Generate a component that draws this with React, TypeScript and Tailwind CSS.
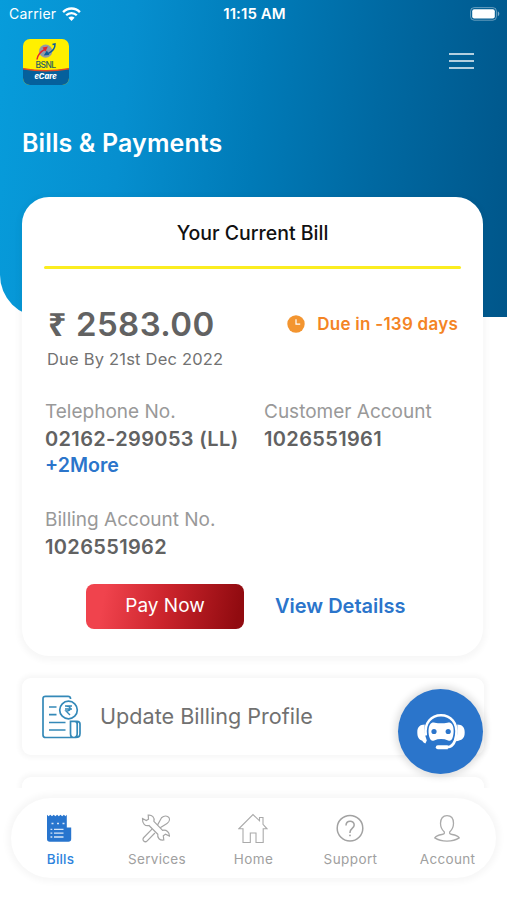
import React from "react";

type IconProps = { className?: string };

const WifiIcon = () => (
  <svg className="h-[15px] w-[19px]" viewBox="0 0 19 15" fill="none" stroke="#fff">
    <path d="M1.1 5.1C5.8.3 13.2.3 17.9 5.1" strokeWidth="2.4" />
    <path d="M4.2 8.3c3-3 7.6-3 10.6 0" strokeWidth="2.3" />
    <path d="M9.5 14 6.4 10.8c1.7-1.6 4.5-1.6 6.2 0Z" fill="#fff" stroke="none" />
  </svg>
);

const BatteryIcon = () => (
  <svg className="h-[14px] w-[30px]" viewBox="0 0 30 14">
    <rect x=".6" y=".6" width="25.8" height="12.6" rx="3.6" fill="none" stroke="#fff" strokeOpacity=".4" />
    <rect x="2.2" y="2.3" width="22.6" height="9.2" rx="2" fill="#fff" />
    <path d="M27.8 4.6c2 .6 2 4 0 4.6Z" fill="#fff" fillOpacity=".5" />
  </svg>
);

const Logo = () => (
  <div className="relative flex h-[46px] w-[46px] flex-col overflow-hidden rounded-[7px] bg-[#fff000]">
    <svg className="absolute inset-0 h-full w-full" viewBox="0 0 46 46" fill="none">
      <path d="M0 29.5Q23 33.5 46 29.5V46H0Z" fill="#05609c" />
      <path d="M0 29Q23 33.2 46 29V30.5Q23 34.6 0 30.5Z" fill="#e04a24" />
      <circle cx="22.7" cy="12.2" r="6.6" fill="#929aa7" />
      <path d="M14 20.5c.6-5 3.2-7.7 8.2-10.4" stroke="#e5242d" strokeWidth="1.6" />
      <path d="m19.5 8.6 5.4-1.1-2.6 5.2Z" fill="#e5242d" />
      <path d="M29.5 5.5 32 5c.2 4-2.4 7.4-7 9.7" stroke="#0e5b99" strokeWidth="1.5" />
      <path d="m26.3 16-5.6.4 3.2-5Z" fill="#0e5b99" />
    </svg>
    <span className="relative mt-[20.5px] pr-[1px] text-center text-[8.5px] leading-[10px] font-medium tracking-[-0.6px] text-[#285d62]">BSNL</span>
    <span className="relative mt-[3.5px] pr-[1px] text-center text-[7.5px] leading-[8px] font-extrabold text-white italic">eCare</span>
  </div>
);

const BillingIcon = () => (
  <svg className="h-[44px] w-[39px]" viewBox="0 0 39 44" fill="none" stroke="#3489b8" strokeWidth="1.7">
    <path d="M28.5 4V3.5C28.5 2 27.7 1.3 26 1.3H3.5C1.8 1.3 1 2.1 1 3.8V40c0 1.8.8 2.5 2.6 2.5h30.2c2.5 0 4.2-1.6 4.2-4V29c0-1.8-1.1-2.7-3-2.7h-6.5v12.2c0 2.7 1.2 4 3.3 4s3.4-1.3 3.4-4V29c0-1.5-1-2.7-2.5-2.7" />
    <circle cx="26.5" cy="15" r="8.8" />
    <path d="M7 12h7.5M7 19.7h7.5M7 27.5h16.5M7 35h16.5" />
    <path d="M23 11h7M23 14h7M24 11c5.5 0 5.5 5 0 5l4 4" strokeWidth="1.4" />
  </svg>
);

const BotIcon = () => (
  <svg className="h-[37px] w-[48px]" viewBox="0 0 48 37" fill="none">
    <path d="M8.8 22.5C6.8 9.5 14.8 2.2 24 2.2s17.2 7.3 15.2 20.3c-1.2 8-4.6 11.7-9.2 11.7h-8.5" stroke="#fff" strokeWidth="2.6" />
    <path d="M20.8 32.2h10v4h-10a2 2 0 0 1 0-4Z" fill="#fff" />
    <path d="M7.7 11.5C3 11.7.3 13.8.3 19.2c0 5.3 1.8 7.4 5 8.6.8 1.3 1.7 2.3 3.1 2.8l1.4-3.2c-2.2-5.8-2.6-10.2-2.1-15.9Z" fill="#fff" />
    <path d="M40.3 11.5c4.7.2 7.4 2.3 7.4 7.7 0 6.3-2.6 8-9 9.1 1.9-5.7 2.1-11.1 1.6-16.8Z" fill="#fff" />
    <path d="M12.8 25.3c-1.8-4.9-1.7-10.9.4-14.1 1.1-1.6 2.6-1.9 4.6-1.5 4.2.8 8.4.8 12.6 0 2-.4 3.5-.1 4.6 1.5 2.1 3.2 2.2 9.2.4 14.1-.8 2.2-2.3 2.9-4.3 2.1-4.5-1.8-9.5-1.8-14 0-2 .8-3.5.1-4.3-2.1Z" fill="#fff" />
    <circle cx="17" cy="18.5" r="2.6" fill="#2b75cb" />
    <circle cx="31.2" cy="18.5" r="2.6" fill="#2b75cb" />
  </svg>
);

const BillsIcon = ({ className }: IconProps) => (
  <svg className={className} viewBox="0 0 30 30">
    <path d="M3 1.7 4.6 3.2l1.7-1.5L8 3.2l1.7-1.5 1.7 1.5 1.7-1.5 1.7 1.5 1.7-1.5 1.7 1.5 1.7-1.5 1.5 1.5 1.4-1.5V14.5h4.4v11.4c0 1.8-1 2.8-2.8 2.8H5.8C4 28.7 3 27.7 3 25.9Z" fill="#2875ce" />
    <path d="M7.5 10.5h2M13 10.5h2M18.5 10.5h2M6.5 16.4h1.8M6.5 20.2h1.8M6.5 24h1.8M10 16.4h9.5M10 20.2h9.5M10 24h9.5" stroke="#d7e6f8" strokeWidth="1.3" />
  </svg>
);

const ServicesIcon = ({ className }: IconProps) => (
  <svg className={className} viewBox="0 0 30 30" fill="none" stroke="#a5a5a5" strokeWidth="1.2">
    <path d="m16.2 12.6 4.3-7.8c2.7-2.6 6-2.2 7.5-.1 1.1 2-.1 4.5-2 5.7l-7.2 4.6M11 16.2l-8.2 8.3c-2.4 2.5 1.1 5.7 3.4 3.3l7.7-7.8" />
    <path d="m1.5 5.5 3.8 2 2.2-1.3-.3-4.1c3.9-.4 6.7 2.3 5.7 6.2l8.7 9c3.9-.7 7 1.8 6.8 5.7l-3.9-1.7-2.2 1.4.5 4.3c-4 .5-6.8-2-6-5.8L8 12.5c-3.8 1-6.8-1.7-6.5-7Z" fill="#fff" />
  </svg>
);

const HomeIcon = ({ className }: IconProps) => (
  <svg className={className} viewBox="0 0 30 30" fill="none" stroke="#aaa" strokeWidth="1.1">
    <path d="M5 15.8H.8L15 1.5l6.5 6.3V4.5H25v6.8l4 4.5h-3.8v13.7H18V20h-5.7v9.5H5Z" />
  </svg>
);

const SupportIcon = ({ className }: IconProps) => (
  <svg className={className} viewBox="0 0 30 30" fill="none" stroke="#a2a2a2" strokeWidth="1.5">
    <circle cx="15" cy="15.2" r="12.8" />
    <path d="M11 12.5c.1-5.6 8.2-5.5 8.2-.5 0 3.3-4.2 3.4-4.2 7.2v.8" strokeWidth="1.5" />
    <circle cx="15" cy="22.4" r=".9" fill="#a2a2a2" stroke="none" />
  </svg>
);

const AccountIcon = ({ className }: IconProps) => (
  <svg className={className} viewBox="0 0 30 30" fill="none" stroke="#aaa" strokeWidth="1.3">
    <path d="M12.3 18.9c-2.5-2.2-3.8-5-3.8-8.6C8.5 5.7 10.8 2.6 15 2.6s6.5 3.1 6.5 7.7c0 3.6-1.3 6.4-3.8 8.6-.5 1.7.5 2.3 2.4 2.6 4 .6 6.2 1.8 7.1 3.4-3 2-7 3.2-12.2 3.2s-9.2-1.2-12.2-3.2c.9-1.6 3.1-2.8 7.1-3.4 1.9-.3 2.9-.9 2.4-2.6Z" />
  </svg>
);

const tabs = [
  { label: "Bills", Icon: BillsIcon, text: "text-[#2d83dc] tracking-[0.2px] font-medium pl-[2px]" },
  { label: "Services", Icon: ServicesIcon, text: "text-[#a0a0a0] tracking-[0.3px] pl-[1px]" },
  { label: "Home", Icon: HomeIcon, text: "text-[#a0a0a0] tracking-[0.4px]" },
  { label: "Support", Icon: SupportIcon, text: "text-[#a0a0a0] tracking-[0.4px]" },
  { label: "Account", Icon: AccountIcon, text: "text-[#a0a0a0] tracking-[0.3px]" },
];

const Field = ({ label, value }: { label: string; value: string }) => (
  <div className="whitespace-nowrap">
    <div className="h-[27px] text-[19px] leading-[28px] text-[#999]">{label}</div>
    <div className="text-[20px] leading-[28px] font-semibold tracking-[0.35px] text-[#626262]">{value}</div>
  </div>
);

export default function App() {
  return (
    <div className="relative h-[900px] w-[507px] overflow-hidden bg-white font-['Inter',sans-serif]">
      <header className="h-[317px] rounded-bl-[42px] bg-[linear-gradient(96deg,#079cdb_0%,#068fcf_25%,#007ab7_50%,#0069a2_72%,#00568a_100%)] text-white">
        <div className="grid h-7 grid-cols-3 items-center pr-[7px] pl-[9px] text-[14px] leading-5">
          <div className="flex items-center gap-[6px] tracking-[0.2px]">Carrier <WifiIcon /></div>
          <div className="text-center text-[15px] font-semibold tracking-[0.1px]">11:15 AM</div>
          <div className="flex justify-end"><BatteryIcon /></div>
        </div>
        <div className="flex items-start justify-between pt-[11px] pr-[33px] pl-[23px]">
          <Logo />
          <div className="mt-[14px] flex w-[25px] flex-col gap-[5px]">
            <span className="h-[2px] bg-white/70" />
            <span className="h-[2px] bg-white/70" />
            <span className="h-[2px] bg-white/70" />
          </div>
        </div>
        <h1 className="mt-[42px] pl-[22px] text-[25px] leading-[32px] font-semibold tracking-[0.12px]">Bills &amp; Payments</h1>
      </header>

      <main className="relative -mt-[120px] px-[22px]">
        <section className="h-[459px] w-[461px] rounded-[27px] bg-white px-[22px] shadow-[0_2px_6px_3px_rgba(0,0,0,0.035)]">
          <h2 className="flex h-[69px] items-center justify-center pt-[5px] text-[19.5px] font-medium text-[#111]">Your Current Bill</h2>
          <div className="h-[3px] w-[417px] rounded-full bg-[#fbed20]" />
          <div className="flex h-[71px] items-center justify-between pt-[38px] pr-[3px] pl-[4px] whitespace-nowrap">
            <div className="flex items-center gap-[9px] font-semibold text-[#626262]">
              <span className="w-[19px] font-['Noto_Sans',sans-serif] text-[32px] leading-[32px] font-bold">₹</span>
              <span className="text-[33px] leading-[32px] tracking-[0.4px]">2583.00</span>
            </div>
            <div className="flex items-center gap-[12px] text-[17px] leading-[20px] font-semibold tracking-[0.25px] text-[#f48424]">
              <svg className="h-[18px] w-[18px]" viewBox="0 0 18 18">
                <circle cx="9" cy="9" r="8.7" fill="#f39530" />
                <path d="M9 4.2v5h4.2" fill="none" stroke="#fff" strokeWidth="1.2" />
              </svg>
              Due in -139 days
            </div>
          </div>
          <div className="mt-[7px] pl-[3px] text-[16.5px] leading-[24px] tracking-[0.2px] text-[#727272]">Due By 21st Dec 2022</div>
          <div className="mt-[27px] grid grid-cols-[220px_1fr]">
            <div className="pl-[1px]">
              <Field label="Telephone No." value="02162-299053 (LL)" />
              <div className="text-[19.6px] leading-[24px] font-semibold text-[#2b75cb]">+2More</div>
            </div>
            <Field label="Customer Account" value="1026551961" />
          </div>
          <div className="mt-[29px] pl-[1px]"><Field label="Billing Account No." value="1026551962" /></div>
          <div className="mt-[23px] flex items-center pl-[42px]">
            <button className="h-[45px] w-[158px] rounded-[8px] bg-[linear-gradient(100deg,#f0434d_12%,#cb242c_50%,#910b10_95%)] text-[19px] text-white">Pay Now</button>
            <span className="ml-[31px] pb-[2px] text-[20px] leading-[28px] font-semibold text-[#2b75cb]">View Detailss</span>
          </div>
        </section>

        <section className="mt-[22px] flex h-[77px] w-[462px] items-center rounded-[9px] bg-white pl-[20px] shadow-[0_0_5px_3px_rgba(0,0,0,0.035)]">
          <BillingIcon />
          <span className="ml-[19px] text-[21.6px] text-[#717171]">Update Billing Profile</span>
        </section>
        <section className="mt-[22px] h-[77px] w-[462px] rounded-[9px] bg-white shadow-[0_0_5px_3px_rgba(0,0,0,0.035)]" />
      </main>

      <div className="absolute inset-x-0 top-[788px] h-[112px] bg-white px-[11px] pt-[10px]">
        <nav className="grid h-[80px] grid-cols-5 rounded-full bg-white px-0 pt-[15px] shadow-[0_0_6px_4px_rgba(0,0,0,0.035)]">
          {tabs.map(({ label, Icon, text }) => (
            <div key={label} className="flex flex-col items-center">
              <Icon className="mr-[1px] h-[30px] w-[30px]" />
              <span className={`mt-[6px] text-[13.5px] leading-[20px] ${text}`}>{label}</span>
            </div>
          ))}
        </nav>
      </div>

      <button className="absolute top-[689px] left-[398px] flex h-[85px] w-[85px] items-center justify-center rounded-full bg-[#2b75cb] shadow-[0_0_7px_3px_rgba(0,0,0,0.12)]">
        <BotIcon />
      </button>
    </div>
  );
}
